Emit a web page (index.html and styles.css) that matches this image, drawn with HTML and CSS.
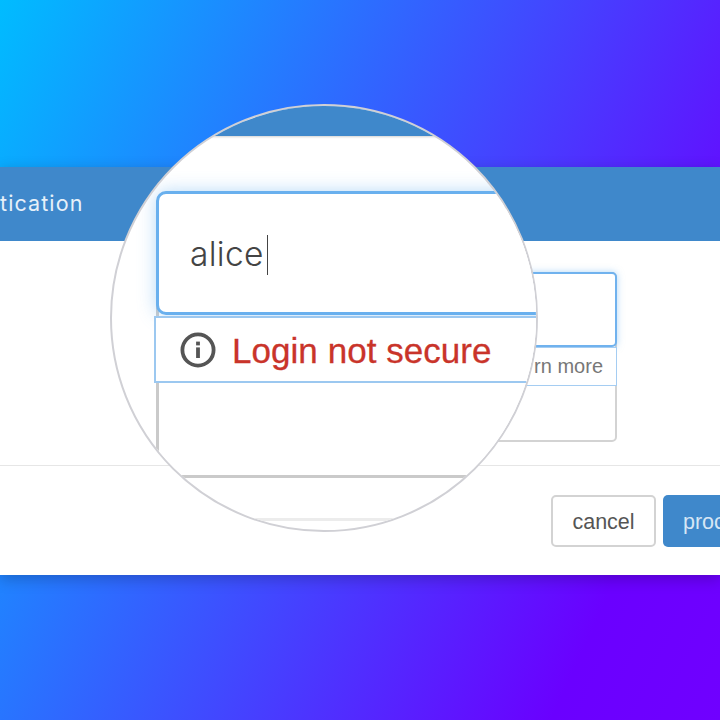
FILE: index.html
```html
<!DOCTYPE html>
<html lang="en">
<head>
<meta charset="utf-8">
<title>Login not secure</title>
<link rel="stylesheet" href="styles.css">
</head>
<body>
<main class="stage">
  <section class="modal">
    <header class="modal-head"><span class="modal-title">tication</span></header>
    <div class="modal-body">
      <div class="field-stack">
        <div class="field-input"></div>
        <div class="field-note"><span>rn more</span></div>
      </div>
    </div>
    <footer class="modal-foot">
      <button class="btn btn-cancel">cancel</button>
      <button class="btn btn-proceed">proceed</button>
    </footer>
  </section>
  <div class="lens">
    <div class="lens-head"></div>
    <div class="lens-sheet"></div>
    <div class="lens-rule"></div>
    <div class="lens-input"><span class="lens-value">alice</span><i class="caret"></i></div>
    <div class="lens-note">
      <svg class="info" viewBox="0 0 36 36" aria-hidden="true">
        <circle cx="18" cy="18" r="15.6" fill="none" stroke="#555" stroke-width="3.8"/>
        <rect x="16.1" y="15.4" width="3.8" height="10.6" fill="#555"/>
        <rect x="16.1" y="9.6" width="3.8" height="3.8" fill="#555"/>
      </svg>
      <span class="lens-warn">Login not secure</span>
    </div>
  </div>
</main>
</body>
</html>
```
FILE: styles.css
```css
* { box-sizing: border-box; }
html, body { margin: 0; padding: 0; }
body { width: 720px; height: 720px; overflow: hidden; font-family: "Liberation Sans", sans-serif; }
.stage {
  position: relative;
  width: 720px;
  height: 720px;
  padding-top: 167px;
  overflow: hidden;
  background: linear-gradient(115deg, #00bcff 0%, #6a00ff 84%, #7000ff 100%);
}
.modal { height: 408px; background: #fff; display: flex; flex-direction: column; box-shadow: 0 4px 14px rgba(0,0,0,.22); }
.modal-head {
  height: 74px;
  background: #3f88cb;
  display: flex;
  align-items: center;
  padding-bottom: 2px;
}
.modal-title { font-family: "Inter", sans-serif; font-weight: 400; color: #e6f0f9; font-size: 21.5px; letter-spacing: 1.1px; }
.modal-body { height: 225px; display: flex; justify-content: flex-end; padding: 31px 103px 0 0; border-bottom: 1px solid #e6e6e6; }
.field-stack { width: 240px; height: 170px; border: 2px solid #d3d3d3; border-radius: 5px; position: relative; }
.field-input {
  position: absolute; left: -2px; right: -2px; top: -2px; height: 75px;
  border: 2px solid #70b2ee; border-radius: 5px; background: #fff;
  box-shadow: 0 0 7px rgba(100,175,240,.5);
}
.field-note {
  position: absolute; left: -2px; right: -2px; top: 73px; height: 39px;
  border: 1px solid #a5cdf2; background: #fff;
  display: flex; align-items: center; justify-content: flex-end; padding-right: 13px;
  font-size: 20px; color: #777;
}
.modal-foot { flex: 1; display: flex; gap: 7px; padding: 29px 0 0 551px; }
.btn { height: 52px; border-radius: 5px; font-family: "Liberation Sans", sans-serif; font-size: 21.5px; flex: none; padding: 2px 0 0; }
.btn-cancel { width: 105px; border: 2px solid #d3d3d3; background: #fff; color: #555; }
.btn-proceed { width: 120px; border: 0; background: #3f88cb; color: #d6e6f5; text-align: left; padding-left: 20px; }
.lens {
  position: absolute; left: 110px; top: 104px; width: 427.5px; height: 427.5px;
  border-radius: 50%; background: #fff; border: 2px solid #d0d0d5; overflow: hidden;
}
.lens-head { position: absolute; left: 0; right: 0; top: 0; height: 30px; background: #3f88cb; box-shadow: 0 1px 2px rgba(0,0,0,.18); }
.lens-sheet {
  position: absolute; left: 44px; top: 100px; width: 500px; height: 272px;
  border: 3px solid #cacaca; border-radius: 8px; background: #fff;
}
.lens-rule { position: absolute; left: 0; right: 0; top: 412px; height: 3px; background: #ececec; }
.lens-input {
  position: absolute; left: 44px; top: 85px; width: 500px; height: 123.5px;
  border: 3px solid #69b0ee; border-radius: 10px; background: #fff;
  box-shadow: 0 0 18px rgba(100,175,240,.45);
  display: flex; align-items: center; padding: 3px 0 0 31px;
}
.lens-value { font-family: "Inter", sans-serif; font-weight: 300; font-size: 33.5px; color: #444; letter-spacing: 0.3px; }
.caret { width: 1.5px; height: 40px; background: #444; display: block; margin: 1px 0 0 3px; }
.lens-note {
  position: absolute; left: 42px; top: 210px; width: 500px; height: 66.5px;
  border: 2.5px solid #9cc8f0; background: #fff;
  display: flex; align-items: center; padding: 1px 0 0 24px; gap: 16px;
}
.info { width: 36px; height: 36px; flex: none; }
.lens-warn { font-size: 35px; color: #c9342a; letter-spacing: 0.05px; padding-top: 3px; -webkit-text-stroke: 0.3px #c9342a; }
```
